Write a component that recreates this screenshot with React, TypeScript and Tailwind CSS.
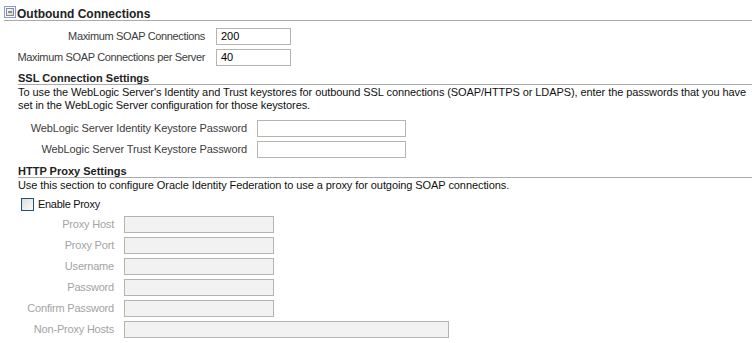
import React from "react";

const font = { fontFamily: '"Liberation Sans", Arial, sans-serif' };

function Input({ w, value, disabled }: { w: string; value?: string; disabled?: boolean }) {
  return (
    <div
      className={`h-[17px] border border-[#b5b5b0] ${w} ${disabled ? "bg-[#f2f2f2]" : "bg-white"} flex items-center pl-[4px] text-[11px] text-black`}
    >
      {value}
    </div>
  );
}

function Row({ labelW, gap, label, input, gray, track }: { labelW: string; gap: string; label: string; input: React.ReactNode; gray?: boolean; track: string }) {
  return (
    <div className="flex h-[21px] items-center">
      <div className={`${labelW} ${track} whitespace-nowrap text-right text-[11px] leading-[13px] ${gray ? "text-[#a3a3a3]" : "text-[#3c3c3c]"}`}>{label}</div>
      <div className={gap}>{input}</div>
    </div>
  );
}

export default function App() {
  return (
    <div className="w-[752px] h-[343px] bg-white overflow-hidden" style={font}>
      {/* Header */}
      <div className="ml-[4px] h-[21px] border-b border-[#aaaaaa] flex items-end">
        <svg width="13" height="12" viewBox="0 0 13 12" className="mb-[2px]">
          <rect x="0.5" y="0.5" width="11" height="11" fill="none" stroke="#1a2fd0" strokeDasharray="1 1" />
          <defs>
            <linearGradient id="g1" x1="0" y1="0" x2="1" y2="1">
              <stop offset="0" stopColor="#ffffff" />
              <stop offset="1" stopColor="#cfcfcf" />
            </linearGradient>
          </defs>
          <rect x="2.5" y="2.5" width="7" height="7" fill="url(#g1)" stroke="#8a8a8a" />
          <rect x="4" y="5.5" width="4" height="1" fill="#333" />
        </svg>
        <span className="text-[12px] font-bold leading-[12px] text-[#222]">Outbound Connections</span>
      </div>

      <div className="mt-[5px]">
        <Row track="tracking-[-0.35px]" labelW="w-[205px]" gap="ml-[11px]" label="Maximum SOAP Connections" input={<Input w="w-[75px]" value="200" />} />
        <Row track="tracking-[-0.35px]" labelW="w-[205px]" gap="ml-[11px]" label="Maximum SOAP Connections per Server" input={<Input w="w-[75px]" value="40" />} />
      </div>

      {/* SSL */}
      <div className="ml-[18px] mt-[5px]">
        <div className="h-[12px] border-b border-[#a9a9b0] text-[11px] font-bold leading-[11px] text-[#222]">SSL Connection Settings</div>
        <div className="whitespace-nowrap text-[11px] leading-[13px] tracking-[-0.08px] text-[#111] pt-[1px]">
          To use the WebLogic Server's Identity and Trust keystores for outbound SSL connections (SOAP/HTTPS or LDAPS), enter the passwords that you have
          <br />
          set in the WebLogic Server configuration for those keystores.
        </div>
      </div>
      <div className="mt-[6px]">
        <Row track="tracking-[-0.1px]" labelW="w-[247px]" gap="ml-[10px]" label="WebLogic Server Identity Keystore Password" input={<Input w="w-[149px]" />} />
        <Row track="tracking-[-0.1px]" labelW="w-[247px]" gap="ml-[10px]" label="WebLogic Server Trust Keystore Password" input={<Input w="w-[149px]" />} />
      </div>

      {/* HTTP Proxy */}
      <div className="ml-[18px] mt-[6px]">
        <div className="h-[12px] border-b border-[#a9a9b0] text-[11px] font-bold leading-[11px] text-[#222]">HTTP Proxy Settings</div>
        <div className="whitespace-nowrap text-[11px] leading-[13px] tracking-[-0.08px] text-[#111] pt-[1px]">
          Use this section to configure Oracle Identity Federation to use a proxy for outgoing SOAP connections.
        </div>
      </div>
      <div className="mt-[3px] ml-[21px] h-[19px] flex items-center">
        <div className="w-[13px] h-[13px] border border-[#1c5180] bg-gradient-to-br from-[#dcdcd7] to-[#fbfbf9]" />
        <span className="ml-[4px] text-[11px] leading-[13px] tracking-[-0.3px] text-[#111]">Enable Proxy</span>
      </div>
      <div>
        <Row gray track="tracking-[-0.2px]" labelW="w-[114px]" gap="ml-[10px]" label="Proxy Host" input={<Input disabled w="w-[150px]" />} />
        <Row gray track="tracking-[-0.2px]" labelW="w-[114px]" gap="ml-[10px]" label="Proxy Port" input={<Input disabled w="w-[150px]" />} />
        <Row gray track="tracking-[-0.2px]" labelW="w-[114px]" gap="ml-[10px]" label="Username" input={<Input disabled w="w-[150px]" />} />
        <Row gray track="tracking-[-0.2px]" labelW="w-[114px]" gap="ml-[10px]" label="Password" input={<Input disabled w="w-[150px]" />} />
        <Row gray track="tracking-[-0.2px]" labelW="w-[114px]" gap="ml-[10px]" label="Confirm Password" input={<Input disabled w="w-[150px]" />} />
        <Row gray track="tracking-[-0.2px]" labelW="w-[114px]" gap="ml-[10px]" label="Non-Proxy Hosts" input={<Input disabled w="w-[325px]" />} />
      </div>
    </div>
  );
}
